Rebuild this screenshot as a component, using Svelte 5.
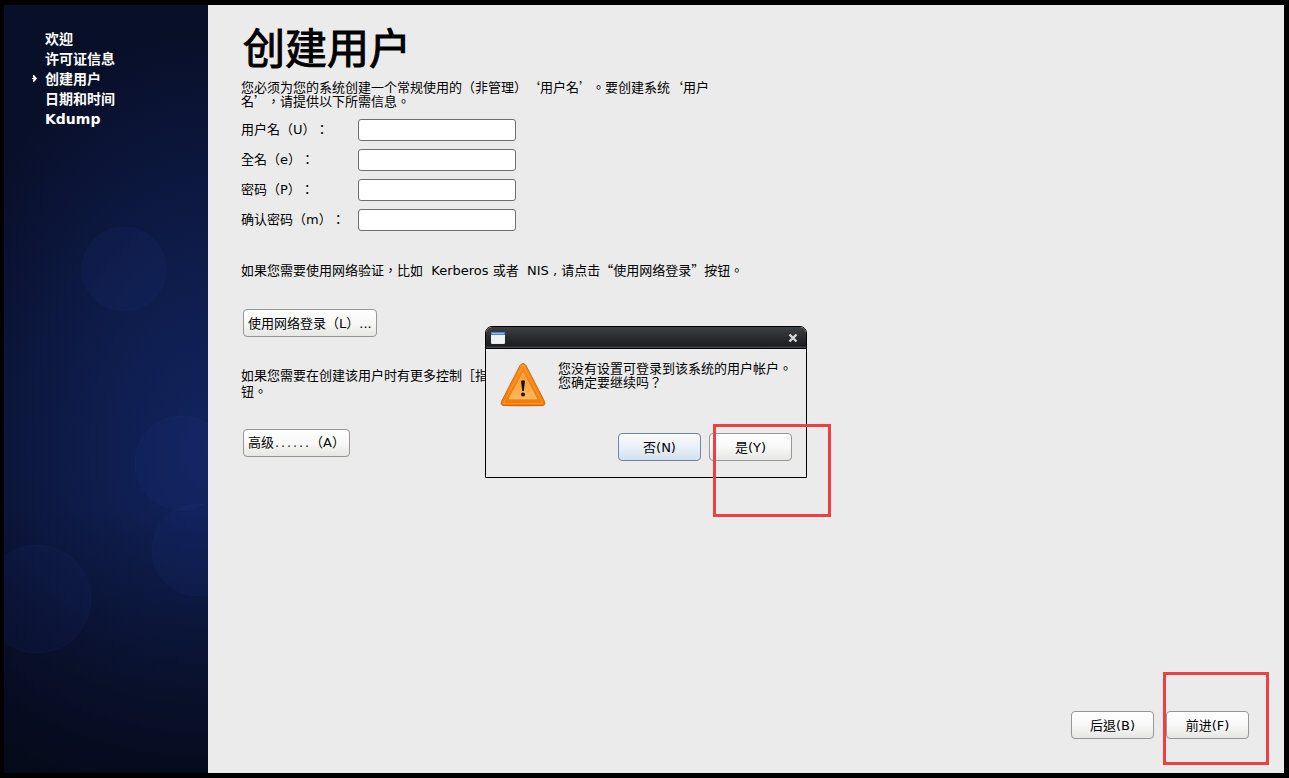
<script>
  const steps = ['欢迎', '许可证信息', '创建用户', '日期和时间', 'Kdump']
  const current = 2

  const fields = [
    { id: 'username', label: '用户名（U）：', type: 'text' },
    { id: 'fullname', label: '全名（e）：', type: 'text' },
    { id: 'password', label: '密码（P）：', type: 'password' },
    { id: 'confirm', label: '确认密码（m）：', type: 'password' }
  ]

  let values = $state({ username: '', fullname: '', password: '', confirm: '' })
  let dialogOpen = $state(true)

  function closeDialog() {
    dialogOpen = false
  }
</script>

<div class="screen">
  <aside class="sidebar">
    <svg class="bubbles" width="204" height="768" viewBox="0 0 204 768" aria-hidden="true">
      <g fill="#2c4cb4" fill-opacity="0.07" stroke="#4a68c8" stroke-opacity="0.05">
        <circle cx="120" cy="264" r="42" />
        <circle cx="178" cy="458" r="47" />
        <circle cx="194" cy="545" r="46" />
        <circle cx="33" cy="594" r="54" />
      </g>
    </svg>
    <ol class="steps">
      {#each steps as step, i (step)}
        <li class="step" aria-current={i === current ? 'step' : undefined}>
          {#if i === current}
            <svg class="arrow" width="5" height="7" viewBox="0 0 5 7" aria-hidden="true">
              <path d="M1 0 L2 0 L5 3.5 L2 7 L1 7 L1 5 L2 3.5 L1 2 Z M0 3 H3 V4 H0 Z" fill="#fff" />
            </svg>
          {/if}
          {step}
        </li>
      {/each}
    </ol>
  </aside>

  <main class="content">
    <h1>创建用户</h1>
    <p class="intro">
      您必须为您的系统创建一个常规使用的（非管理）‘用户名’。要创建系统‘用户名’，请提供以下所需信息。
    </p>

    <form class="fields">
      {#each fields as field (field.id)}
        <label for={field.id}>{field.label}</label>
        <input id={field.id} type={field.type} bind:value={values[field.id]} />
      {/each}
    </form>

    <p class="network">
      如果您需要使用网络验证，比如<span class="latin">&nbsp; Kerberos&nbsp;</span>或者<span class="latin">&nbsp; NIS ,&nbsp;</span>请点击“使用网络登录”按钮。
    </p>
    <button class="btn inline" type="button">使用网络登录（L）...</button>

    <p class="advanced">如果您需要在创建该用户时有更多控制［指<br />钮。</p>
    <button class="btn inline" type="button">高级<span class="dots">......</span>（A）</button>

    <footer class="actions">
      <button class="btn wide" type="button">后退(B)</button>
      <span class="marked">
        <button class="btn wide" type="button">前进(F)</button>
        <span class="mark mark-forward"></span>
      </span>
    </footer>
  </main>

  {#if dialogOpen}
    <div class="dialog" role="alertdialog" aria-labelledby="dialog-text">
      <div class="titlebar">
        <svg width="14" height="12" viewBox="0 0 14 12" aria-hidden="true">
          <rect width="14" height="12" rx="1" fill="#e9ebee" />
          <rect width="14" height="3" fill="#4c86cf" />
          <rect x="1" y="1" width="12" height="1" fill="#8db8ea" />
          <rect x="1" y="3" width="12" height="8" fill="#f1f1f1" />
        </svg>
        <button class="close" type="button" aria-label="关闭" onclick={closeDialog}>
          <svg width="10" height="10" viewBox="0 0 10 10" aria-hidden="true">
            <path d="M1.5 1.5 L8.5 8.5 M8.5 1.5 L1.5 8.5" stroke="#d8d8d8" stroke-width="2.4" />
          </svg>
        </button>
      </div>
      <div class="message">
        <svg width="46" height="46" viewBox="0 0 46 46" aria-hidden="true">
          <defs>
            <linearGradient id="warn-edge" x1="0" y1="0" x2="0" y2="1">
              <stop offset="0" stop-color="#f98b1d" />
              <stop offset="1" stop-color="#f57900" />
            </linearGradient>
            <linearGradient id="warn-face" x1="0" y1="0" x2="0" y2="1">
              <stop offset="0" stop-color="#fb9a35" />
              <stop offset="1" stop-color="#fdb65c" />
            </linearGradient>
          </defs>
          <ellipse cx="23" cy="44.5" rx="21" ry="1.5" fill="#000" opacity="0.15" />
          <path
            d="M20 4.5 Q23 0.5 26 4.5 L44.5 40.5 Q46 44.5 42 44.5 L4 44.5 Q0 44.5 1.5 40.5 Z"
            fill="url(#warn-edge)"
            stroke="#d8690f"
          />
          <path d="M23 4 L42.5 42.5 L3.5 42.5 Z" fill="none" stroke="#fcae5a" stroke-opacity="0.6" />
          <path d="M23 12 L37 38 L9 38 Z" fill="url(#warn-face)" stroke="#fcc078" stroke-width="0.6" />
          <path d="M21 20 Q23 18.4 25 20 L23.8 30 L22.2 30 Z" fill="#1c0f00" />
          <circle cx="23" cy="33.6" r="2" fill="#1c0f00" />
        </svg>
        <p id="dialog-text">您没有设置可登录到该系统的用户帐户。<br />您确定要继续吗？</p>
      </div>
      <div class="choices">
        <button class="btn wide default" type="button" onclick={closeDialog}>否(N)</button>
        <span class="marked">
          <button class="btn wide" type="button" onclick={closeDialog}>是(Y)</button>
          <span class="mark mark-yes"></span>
        </span>
      </div>
    </div>
  {/if}
</div>

<style>
  :global(body) {
    background: #000;
  }

  .screen {
    position: relative;
    box-sizing: border-box;
    display: flex;
    min-height: 100vh;
    padding: 5px 5px 5px 4px;
    background: #000;
    color: #000;
    font-family: 'DejaVu Sans', 'Noto Sans CJK TC', sans-serif;
    font-size: 13px;
    line-height: 16px;
    text-spacing-trim: space-all;
  }

  .sidebar {
    position: relative;
    flex: none;
    width: 204px;
    overflow: hidden;
    background:
      linear-gradient(180deg, rgba(4, 8, 24, 0) 65%, rgba(4, 8, 20, 0.7) 100%),
      radial-gradient(ellipse 280px 420px at 100% 58%, #12245f 0%, #0e1b48 50%, #080f29 100%);
  }

  .bubbles {
    position: absolute;
    top: 0;
    left: 0;
  }

  .steps {
    position: relative;
    margin: 0;
    padding: 24px 0 0 41px;
    list-style: none;
    color: #fff;
    font-size: 14px;
    font-weight: bold;
    line-height: 20px;
  }

  .step {
    position: relative;
  }

  .arrow {
    position: absolute;
    top: 6px;
    left: -13px;
  }

  .content {
    flex: 1;
    display: flex;
    flex-direction: column;
    align-items: flex-start;
    padding: 20px 35px 34px 33px;
    background: #ebebeb;
  }

  h1 {
    margin: 0 0 0 2px;
    font-size: 42px;
    font-weight: normal;
    line-height: 50px;
    -webkit-text-stroke: 1px #000;
  }

  p {
    margin: 0;
    font-family: 'Noto Sans CJK TC', 'DejaVu Sans', sans-serif;
  }

  .latin {
    font-family: 'DejaVu Sans', sans-serif;
  }

  .intro {
    max-width: 480px;
    margin-top: 5px;
    line-height: 14px;
  }

  .fields {
    display: grid;
    grid-template-columns: 117px 158px;
    row-gap: 8px;
    margin-top: 11px;
  }

  .fields label {
    line-height: 22px;
  }

  .fields input {
    box-sizing: border-box;
    width: 100%;
    height: 22px;
    padding: 0 4px;
    border: 1px solid #6f6f6f;
    border-radius: 3px;
    background: #fff;
    font: inherit;
  }

  .network {
    margin-top: 31px;
  }

  .advanced {
    margin-top: 30px;
  }

  .btn {
    box-sizing: border-box;
    height: 28px;
    padding: 1px 4px 0;
    border: 1px solid #979797;
    border-radius: 4px;
    background: linear-gradient(#ffffff, #f8f8f8 50%, #e6e6e4);
    color: #000;
    font: inherit;
    text-spacing-trim: inherit;
    white-space: nowrap;
  }

  .btn.inline {
    margin: 30px 0 0 2px;
  }

  .btn.wide {
    width: 83px;
  }

  .btn.default {
    border-color: #6d87a5;
    background: linear-gradient(#fbfcfe, #e9f0f8 50%, #d3e0ee);
  }

  .dots {
    font-family: 'Liberation Mono', monospace;
    font-size: 10px;
  }

  .actions {
    display: flex;
    gap: 12px;
    align-self: flex-end;
    margin-top: auto;
  }

  .marked {
    position: relative;
    display: flex;
  }

  .mark {
    position: absolute;
    box-sizing: border-box;
    border: 3px solid #ee4040;
    pointer-events: none;
  }

  .mark-forward {
    top: -39px;
    left: -3px;
    width: 106px;
    height: 93px;
  }

  .mark-yes {
    top: -9px;
    left: 4px;
    width: 118px;
    height: 93px;
  }

  .dialog {
    position: absolute;
    top: 326px;
    left: 485px;
    box-sizing: border-box;
    width: 322px;
    border: 1px solid #000;
    border-radius: 7px 7px 0 0;
    background: #ebebeb;
  }

  .titlebar {
    display: flex;
    align-items: center;
    justify-content: space-between;
    box-sizing: border-box;
    height: 22px;
    padding: 1px 8px 0 5px;
    border-bottom: 1px solid #000;
    border-radius: 6px 6px 0 0;
    background: linear-gradient(#3e4143, #2b2d2e 45%, #1c1d1e 90%, #4b5563);
  }

  .close {
    display: flex;
    padding: 0;
    border: 0;
    background: none;
  }

  .message {
    display: flex;
    gap: 12px;
    padding: 12px 14px 0;
  }

  .message p {
    line-height: 14px;
  }

  .choices {
    display: flex;
    justify-content: flex-end;
    gap: 8px;
    padding: 26px 14px 16px;
  }
</style>
